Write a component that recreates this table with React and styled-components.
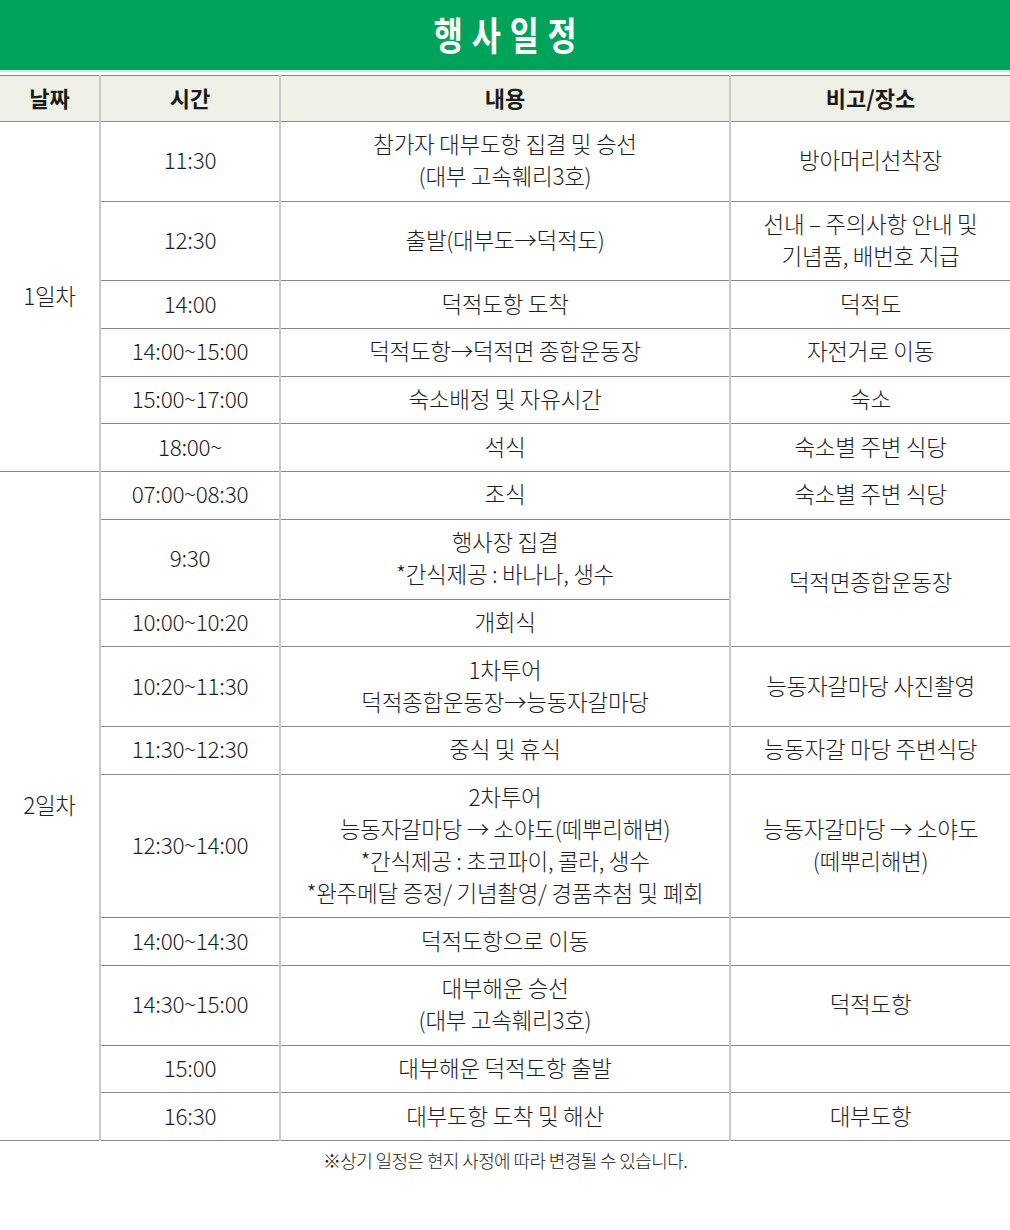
import React from "react";
import styled, { createGlobalStyle } from "styled-components";

const GlobalStyle = createGlobalStyle`
  html, body {
    margin: 0;
    padding: 0;
    background: #ffffff;
  }
  body {
    font-family: "Noto Sans CJK KR", "Noto Sans", sans-serif;
    color: #222222;
  }
`;

const day1 = [
  { time: "11:30", content: ["참가자 대부도항 집결 및 승선", "(대부 고속훼리3호)"], note: ["방아머리선착장"] },
  { time: "12:30", content: ["출발(대부도→덕적도)"], note: ["선내 – 주의사항 안내 및", "기념품, 배번호 지급"] },
  { time: "14:00", content: ["덕적도항 도착"], note: ["덕적도"] },
  { time: "14:00~15:00", content: ["덕적도항→덕적면 종합운동장"], note: ["자전거로 이동"] },
  { time: "15:00~17:00", content: ["숙소배정 및 자유시간"], note: ["숙소"] },
  { time: "18:00~", content: ["석식"], note: ["숙소별 주변 식당"] },
];

// note: null -> covered by the row above (rowspan)
const day2 = [
  { time: "07:00~08:30", content: ["조식"], note: ["숙소별 주변 식당"] },
  { time: "9:30", content: ["행사장 집결", "*간식제공 : 바나나, 생수"], note: ["덕적면종합운동장"], span: 2 },
  { time: "10:00~10:20", content: ["개회식"], note: null },
  { time: "10:20~11:30", content: ["1차투어", "덕적종합운동장→능동자갈마당"], note: ["능동자갈마당 사진촬영"] },
  { time: "11:30~12:30", content: ["중식 및 휴식"], note: ["능동자갈 마당 주변식당"] },
  {
    time: "12:30~14:00",
    content: ["2차투어", "능동자갈마당 → 소야도(떼뿌리해변)", "*간식제공 : 초코파이, 콜라, 생수", "*완주메달 증정/ 기념촬영/ 경품추첨 및 폐회"],
    note: ["능동자갈마당 → 소야도", "(떼뿌리해변)"],
  },
  { time: "14:00~14:30", content: ["덕적도항으로 이동"], note: [] },
  { time: "14:30~15:00", content: ["대부해운 승선", "(대부 고속훼리3호)"], note: ["덕적도항"] },
  { time: "15:00", content: ["대부해운 덕적도항 출발"], note: [] },
  { time: "16:30", content: ["대부도항 도착 및 해산"], note: ["대부도항"] },
];

const Lines = ({ lines }) =>
  lines.map((l, i) => (
    <React.Fragment key={i}>
      {i > 0 && <br />}
      {l}
    </React.Fragment>
  ));

const DayRows = ({ label, rows }) =>
  rows.map((r, i) => (
    <tr key={r.time}>
      {i === 0 && <DayCell rowSpan={rows.length}>{label}</DayCell>}
      <Cell>{r.time}</Cell>
      <Cell>
        <Lines lines={r.content} />
      </Cell>
      {r.note && (
        <Cell rowSpan={r.span || 1}>
          <Lines lines={r.note} />
        </Cell>
      )}
    </tr>
  ));

const App = () => {
  return (
    <Page>
      <GlobalStyle />
      <TitleBar>
        <Title>행사일정</Title>
      </TitleBar>
      <Table>
        <colgroup>
          <col style={{ width: 100 }} />
          <col style={{ width: 180 }} />
          <col style={{ width: 450 }} />
          <col style={{ width: 280 }} />
        </colgroup>
        <thead>
          <tr>
            <HeadCell first>날짜</HeadCell>
            <HeadCell>시간</HeadCell>
            <HeadCell>내용</HeadCell>
            <HeadCell>비고/장소</HeadCell>
          </tr>
        </thead>
        <tbody>
          <DayRows label="1일차" rows={day1} />
          <DayRows label="2일차" rows={day2} />
        </tbody>
      </Table>
      <Footnote>※상기 일정은 현지 사정에 따라 변경될 수 있습니다.</Footnote>
    </Page>
  );
};

export default App;

const Page = styled.div`
  width: 1010px;
  height: 1230px;
  background: #ffffff;
`;

const TitleBar = styled.div`
  height: 70px;
  background: #00a35a;
  border-bottom: 2px solid #d3ebdc;
  margin-bottom: 3px;
  display: flex;
  align-items: center;
  justify-content: center;
`;

const Title = styled.h1`
  margin: 0 0 4px;
  color: #ffffff;
  font-size: 36px;
  font-weight: 700;
  letter-spacing: 10px;
  padding-left: 10px;
  line-height: 1;
  transform: scaleX(0.88) scaleY(1.06);
`;

const Table = styled.table`
  width: 1010px;
  border-collapse: collapse;
  table-layout: fixed;
  border-top: 1px solid #8a8a8a;
`;

const HeadCell = styled.th`
  height: 46px;
  box-sizing: border-box;
  padding: 0 0 4px;
  line-height: 26px;
  background: #eff1e6;
  font-size: 22px;
  font-weight: 700;
  color: #1a1a1a;
  text-align: center;
  border-bottom: 1px solid #8a8a8a;
  border-left: ${(p) => (p.first ? "none" : "2px solid #c9c9c9")};
`;

const Cell = styled.td`
  padding: 5.35px 4px 9.35px;
  font-size: 22.5px;
  line-height: 32px;
  font-weight: 300;
  text-align: center;
  vertical-align: middle;
  color: #1e1e1e;
  letter-spacing: -0.3px;
  white-space: nowrap;
  border-bottom: 1px solid #8a8a8a;
  border-left: 2px solid #c9c9c9;
`;

const DayCell = styled(Cell)`
  border-left: none;
`;

const Footnote = styled.p`
  margin: 8px 0 0;
  text-align: center;
  font-size: 18px;
  line-height: 22px;
  letter-spacing: -0.6px;
  font-weight: 300;
  color: #222222;
`;
